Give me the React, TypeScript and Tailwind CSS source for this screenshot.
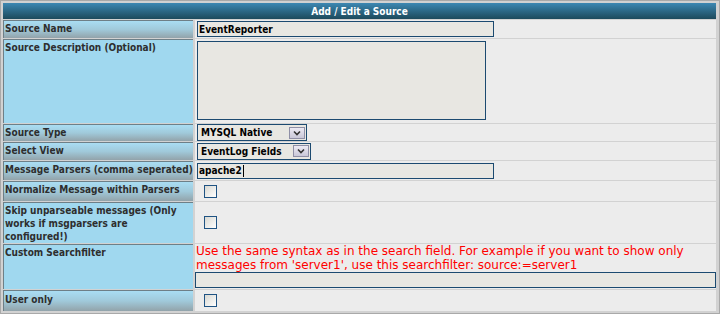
const font = "font-['DejaVu_Sans_Condensed','DejaVu_Sans',sans-serif]";

function TextBox({ value, caret }: { value: string; caret?: boolean }) {
  return (
    <div className="flex h-[16px] w-[297px] items-center border border-[#1c4a70] bg-[#e8e7e2] pl-[1px] text-[10px] font-bold text-black">
      {value}
      {caret && <span className="ml-[1px] h-[12px] w-[1px] bg-black" />}
    </div>
  );
}

function Select({ value, w }: { value: string; w: string }) {
  return (
    <div className={`flex h-[17px] items-center border border-[#1c4a70] bg-[#e8e7e2] pl-[3px] pr-[1px] text-[10px] font-bold text-black ${w}`}>
      <span className="flex-1">{value}</span>
      <span className="flex h-[12px] w-[16px] items-center justify-center border border-[#8f8fa6] bg-linear-to-b from-[#eceaf4] to-[#c9c7d8]">
        <svg width="8" height="6" viewBox="0 0 8 6">
          <path d="M1 1.5 L4 4.5 L7 1.5" fill="none" stroke="#333" strokeWidth="1.6" />
        </svg>
      </span>
    </div>
  );
}

function Check() {
  return <div className="ml-[7px] h-[13px] w-[13px] border border-[#1f5383] bg-linear-to-br from-[#d8d8d2] to-white" />;
}

const rows = [
  { label: 'Source Name', h: 'h-[18px]', grad: true, value: <TextBox value="EventReporter" /> },
  {
    label: 'Source Description (Optional)',
    h: 'h-[84px]',
    grad: false,
    top: true,
    value: <div className="mt-[2px] h-[79px] w-[289px] border border-[#1c4a70] bg-[#e8e7e2]" />,
  },
  { label: 'Source Type', h: 'h-[17px]', grad: true, value: <Select value="MYSQL Native" w="w-[110px]" /> },
  { label: 'Select View', h: 'h-[18px]', grad: true, value: <Select value="EventLog Fields" w="w-[114px]" /> },
  { label: 'Message Parsers (comma seperated)', h: 'h-[19px]', grad: true, value: <TextBox value="apache2" caret /> },
  { label: 'Normalize Message within Parsers', h: 'h-[20px]', grad: true, value: <Check /> },
  { label: 'Skip unparseable messages (Only works if msgparsers are configured!)', h: 'h-[41px]', grad: false, value: <Check /> },
];

export default function App() {
  return (
    <div className={`h-[314px] w-[720px] border border-[#a9a9a9] bg-[#d2d2d2] pl-[2px] pr-[3px] pt-[2px] ${font}`}>
      <div className="grid grid-cols-[190px_521px] gap-x-[2px] gap-y-[1px]">
        <div className="col-span-2 flex h-[16px] items-center justify-center bg-linear-to-b from-[#3d88b3] to-[#1d4a5c] text-[10px] font-bold text-white">
          Add / Edit a Source
        </div>

        {rows.map((r) => (
          <div key={r.label} className="contents">
            <div
              className={`${r.h} border-l border-t border-[#6e7f87] pl-[1px] pt-[1px] text-[10px] font-bold leading-[13px] text-[#2e2e2e] ${
                r.grad ? 'bg-linear-to-b from-[#a9ddf3] via-[#a0c9da] to-[#92a3aa]' : 'bg-[#a0d8ef]'
              }`}
            >
              {r.label}
            </div>
            <div className={`${r.h} flex bg-[#ececec] pl-[2px] ${r.top ? 'items-start' : 'items-center'}`}>{r.value}</div>
          </div>
        ))}

        <div className="h-[45px] border-l border-t border-[#6e7f87] bg-[#a0d8ef] pl-[1px] pt-[1px] text-[10px] font-bold leading-[13px] text-[#2e2e2e]">
          Custom Searchfilter
        </div>
        <div className="flex h-[45px] flex-col bg-[#ececec]">
          <p className="pl-[1px] font-['DejaVu_Sans',sans-serif] text-[12px] leading-[14px] text-[#ff0000]">
            Use the same syntax as in the search field. For example if you want to show only messages from 'server1', use
            this searchfilter: source:=server1
          </p>
          <div className="h-[16px] w-full border border-[#1c4a70] bg-[#e8e7e2]" />
        </div>

        <div className="h-[21px] border-l border-t border-[#6e7f87] bg-linear-to-b from-[#a9ddf3] via-[#a0c9da] to-[#92a3aa] pl-[1px] pt-[2px] text-[10px] font-bold leading-[13px] text-[#2e2e2e]">
          User only
        </div>
        <div className="flex h-[21px] items-center bg-[#ececec] pl-[2px]">
          <Check />
        </div>
      </div>
    </div>
  );
}
